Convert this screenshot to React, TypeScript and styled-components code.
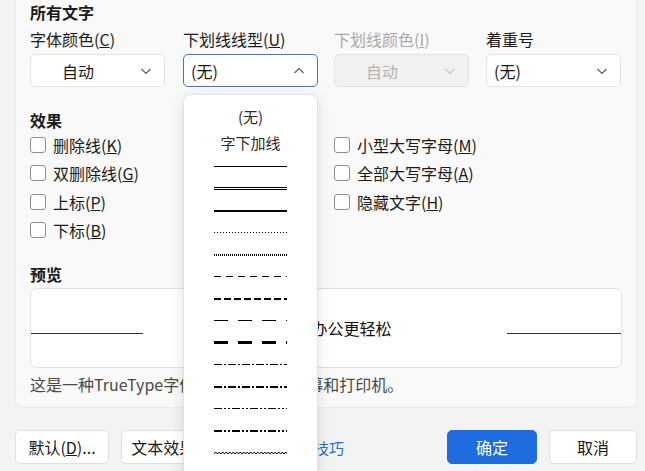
import React, { FC } from 'react';
import styled, { createGlobalStyle, css } from 'styled-components';

type LineKind = {
  width: number;
  dash?: string;
  double?: boolean;
  wave?: boolean;
};

const underlineKinds: LineKind[] = [
  { width: 1 },
  { width: 1, double: true },
  { width: 2 },
  { width: 1, dash: '1 2' },
  { width: 2, dash: '1 1' },
  { width: 1, dash: '7 5' },
  { width: 2, dash: '7 3' },
  { width: 1, dash: '14 10' },
  { width: 3, dash: '14 10' },
  { width: 1, dash: '8 2 2 2' },
  { width: 2, dash: '8 2 2 2' },
  { width: 1, dash: '8 2 2 2 2 2' },
  { width: 2, dash: '8 2 2 2 2 2' },
  { width: 1, wave: true },
];

const wavePath = (): string => {
  let d = 'M0 4';
  for (let x = 0; x < 73; x += 3.5) d += ' l1.75 -2 l1.75 2';
  return d;
};

// odd stroke widths sit on a half pixel so they stay crisp
const lineY = (width: number): number => (width % 2 === 1 ? 2.5 : 3);

const UnderlineSample: FC<{ kind: LineKind }> = ({ kind }) => {
  if (kind.wave)
    return (
      <svg width="73" height="6" viewBox="0 0 73 6">
        <path d={wavePath()} fill="none" stroke="#000" strokeWidth="1" />
      </svg>
    );
  if (kind.double)
    return (
      <svg width="73" height="6" viewBox="0 0 73 6" shapeRendering="crispEdges">
        <line x1="0" y1="1.5" x2="73" y2="1.5" stroke="#000" strokeWidth="1" />
        <line x1="0" y1="3.5" x2="73" y2="3.5" stroke="#000" strokeWidth="1" />
      </svg>
    );
  const y = lineY(kind.width);
  return (
    <svg width="73" height="6" viewBox="0 0 73 6" shapeRendering="crispEdges">
      <line x1="0" y1={y} x2="73" y2={y} stroke="#000" strokeWidth={kind.width} strokeDasharray={kind.dash} />
    </svg>
  );
};

const Chevron: FC<{ up?: boolean; muted?: boolean }> = ({ up, muted }) => (
  <svg width="12" height="8" viewBox="0 0 12 8">
    <path
      d={up ? 'M1.5 6 L6 1.5 L10.5 6' : 'M1.5 2 L6 6.5 L10.5 2'}
      fill="none"
      stroke={muted ? '#c4c4c4' : '#5a5a5a'}
      strokeWidth="1.1"
    />
  </svg>
);

const CheckItem: FC<{ label: string; hotkey: string }> = ({ label, hotkey }) => (
  <CheckRow>
    <Box />
    <span>
      {label}(<u>{hotkey}</u>)
    </span>
  </CheckRow>
);

const App: FC = () => {
  return (
    <Page>
      <GlobalStyle />
      <Panel>
        <SectionTitle>所有文字</SectionTitle>
        <FieldGrid>
          <Field>
            <Label>
              字体颜色(<u>C</u>)
            </Label>
            <Select>
              <SelectValue $centered>自动</SelectValue>
              <Chevron />
            </Select>
          </Field>
          <Field>
            <Label>
              下划线线型(<u>U</u>)
            </Label>
            <Select $active>
              <SelectValue>(无)</SelectValue>
              <Chevron up />
            </Select>
            <Dropdown>
              <TextOption>(无)</TextOption>
              <TextOption>字下加线</TextOption>
              {underlineKinds.map((kind, i) => (
                <LineOption key={i}>
                  <UnderlineSample kind={kind} />
                </LineOption>
              ))}
            </Dropdown>
          </Field>
          <Field>
            <Label $disabled>
              下划线颜色(<u>I</u>)
            </Label>
            <Select $disabled>
              <SelectValue $centered>自动</SelectValue>
              <Chevron muted />
            </Select>
          </Field>
          <Field>
            <Label>着重号</Label>
            <Select>
              <SelectValue>(无)</SelectValue>
              <Chevron />
            </Select>
          </Field>
        </FieldGrid>

        <EffectTitle>效果</EffectTitle>
        <CheckGrid>
          <CheckColumn>
            <CheckItem label="删除线" hotkey="K" />
            <CheckItem label="双删除线" hotkey="G" />
            <CheckItem label="上标" hotkey="P" />
            <CheckItem label="下标" hotkey="B" />
          </CheckColumn>
          <CheckColumn>
            <CheckItem label="小型大写字母" hotkey="M" />
            <CheckItem label="全部大写字母" hotkey="A" />
            <CheckItem label="隐藏文字" hotkey="H" />
          </CheckColumn>
        </CheckGrid>

        <PreviewTitle>预览</PreviewTitle>
        <PreviewBox>
          <PreviewLine $width={112} />
          <PreviewText>WPS 让办公更轻松</PreviewText>
          <PreviewLine $width={114} />
        </PreviewBox>
        <Caption>这是一种TrueType字体，同时适用于屏幕和打印机。</Caption>
      </Panel>

      <ButtonBar>
        <Button $width={94}>
          默认(<u>D</u>)...
        </Button>
        <Button $width={118}>
          文本效果(<u>E</u>)...
        </Button>
        <TipLink>操作技巧</TipLink>
        <Spacer />
        <Button $width={90} $primary>
          确定
        </Button>
        <Button $width={88}>取消</Button>
      </ButtonBar>
    </Page>
  );
};

const GlobalStyle = createGlobalStyle`
  html, body {
    margin: 0;
    padding: 0;
    background: #f3f3f3;
  }

  body {
    font-family: 'Noto Sans CJK SC', 'Noto Sans', sans-serif;
    color: #1b1b1b;
    overflow: hidden;
  }

  * {
    box-sizing: border-box;
  }
`;

const Page = styled.div`
  width: 645px;
  height: 471px;
  padding: 0 8px 0 15px;
  overflow: hidden;
`;

const Panel = styled.section`
  width: 622px;
  padding: 2px 14px 13px;
  background-color: #f9f9f9;
  border: 1px solid #ececec;
  border-top: none;
  border-radius: 0 0 8px 8px;
`;

const SectionTitle = styled.div`
  font-size: 16px;
  font-weight: 700;
  line-height: 20px;
`;

const FieldGrid = styled.div`
  display: grid;
  grid-template-columns: 153px 151px 152px 136px;
  margin-top: 7px;
`;

const Field = styled.div`
  position: relative;
  display: flex;
  flex-direction: column;
  gap: 5px;
`;

const Label = styled.div<{ $disabled?: boolean }>`
  font-size: 16px;
  line-height: 20px;
  white-space: nowrap;
  color: ${({ $disabled }) => ($disabled ? '#a8a8a8' : '#1b1b1b')};
`;

const Select = styled.div<{ $active?: boolean; $disabled?: boolean }>`
  width: 135px;
  height: 33px;
  display: flex;
  align-items: center;
  padding: 0 12px 0 7px;
  background-color: #ffffff;
  border: 1px solid #e3e3e3;
  border-radius: 5px;
  font-size: 16px;
  color: #1b1b1b;

  ${({ $active }) =>
    $active &&
    css`
      border-color: #3a78d8;
    `}

  ${({ $disabled }) =>
    $disabled &&
    css`
      background-color: #f1f1f1;
      color: #b3b3b3;
    `}
`;

const SelectValue = styled.span<{ $centered?: boolean }>`
  flex: 1;
  padding-right: ${({ $centered }) => ($centered ? '22px' : '0')};
  text-align: ${({ $centered }) => ($centered ? 'center' : 'left')};
  line-height: 20px;
`;

const Dropdown = styled.div`
  position: absolute;
  top: calc(100% + 7px);
  left: 0;
  z-index: 10;
  width: 135px;
  height: 390px;
  padding-top: 9px;
  background-color: #ffffff;
  border: 1px solid #e2e2e2;
  border-radius: 8px;
  box-shadow: 0 4px 14px rgba(0, 0, 0, 0.12);
`;

const TextOption = styled.div`
  height: 26px;
  font-size: 15px;
  line-height: 26px;
  text-align: center;
  color: #2b2b2b;
`;

const LineOption = styled.div`
  height: 22px;
  display: flex;
  justify-content: center;
  align-items: center;
`;

const EffectTitle = styled(SectionTitle)`
  margin-top: 23px;
`;

const CheckGrid = styled.div`
  display: grid;
  grid-template-columns: 304px 1fr;
  margin-top: 1px;
`;

const CheckColumn = styled.div`
  display: flex;
  flex-direction: column;
`;

const CheckRow = styled.div`
  height: 28.3px;
  display: flex;
  align-items: center;
  font-size: 16px;
  line-height: 20px;
  white-space: nowrap;
`;

const Box = styled.span`
  width: 16px;
  height: 16px;
  margin-right: 7px;
  background-color: #ffffff;
  border: 1px solid #8f8f8f;
  border-radius: 3px;
`;

const PreviewTitle = styled(SectionTitle)`
  margin-top: 20px;
`;

const PreviewBox = styled.div`
  height: 80px;
  display: flex;
  align-items: center;
  margin-top: 4px;
  background-color: #ffffff;
  border: 1px solid #e2e2e2;
  border-radius: 6px;
  overflow: hidden;
`;

const PreviewLine = styled.div<{ $width: number }>`
  flex: 0 0 ${({ $width }) => $width}px;
  height: 1px;
  margin-top: 10px;
  background-color: #333333;
`;

const PreviewText = styled.div`
  flex: 1;
  font-family: 'Liberation Serif', 'Noto Sans CJK SC', serif;
  font-size: 16px;
  text-align: center;
  color: #111111;
`;

const Caption = styled.div`
  margin-top: 6px;
  font-size: 16px;
  line-height: 20px;
  color: #4a4a4a;
  white-space: nowrap;
`;

const ButtonBar = styled.div`
  display: flex;
  align-items: center;
  gap: 12px;
  width: 622px;
  margin-top: 22px;
`;

const Button = styled.button<{ $width: number; $primary?: boolean }>`
  width: ${({ $width }) => $width}px;
  height: 34px;
  padding: 0;
  font-family: inherit;
  font-size: 16px;
  color: #1b1b1b;
  background-color: #ffffff;
  border: 1px solid #e0e0e0;
  border-radius: 5px;

  ${({ $primary }) =>
    $primary &&
    css`
      color: #ffffff;
      background-color: #1f6be0;
      border-color: #1f6be0;
    `}
`;

const TipLink = styled.span`
  margin-left: 33px;
  font-size: 15px;
  color: #1f6be0;
`;

const Spacer = styled.div`
  flex: 1;
`;

export default App;
